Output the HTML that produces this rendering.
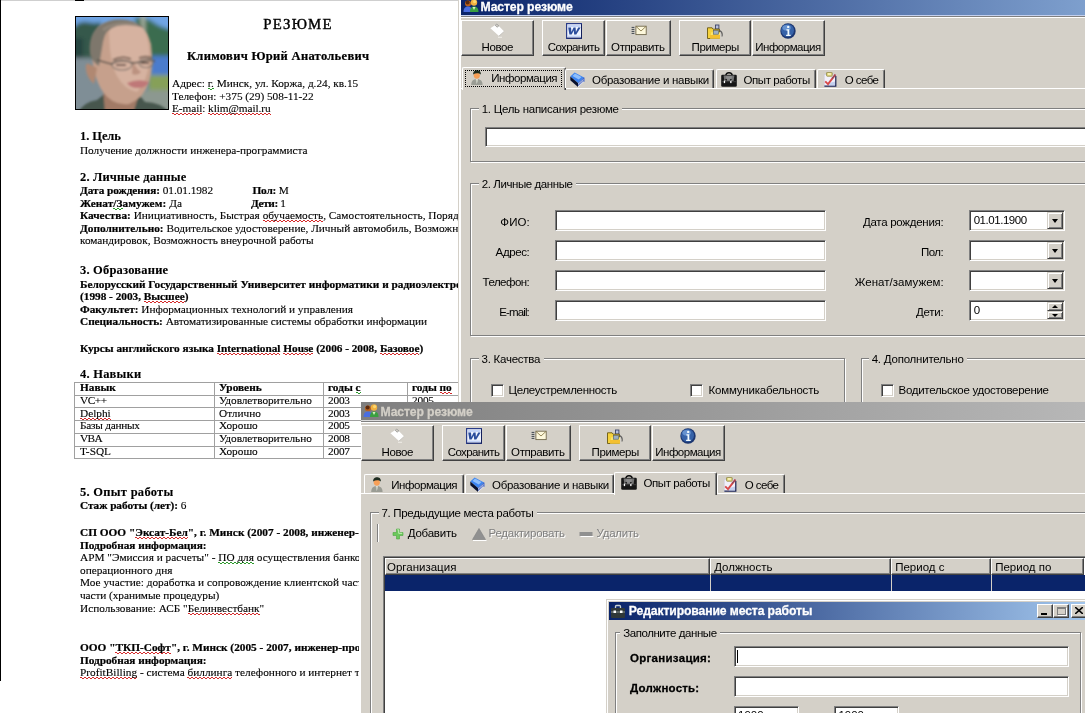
<!DOCTYPE html><html lang="ru"><head><meta charset="utf-8"><title>Мастер резюме</title><style>
*{box-sizing:border-box;margin:0;padding:0}
html,body{width:1085px;height:713px;overflow:hidden;background:#fff}
body{position:relative;font-family:"Liberation Sans",sans-serif;font-size:11.5px;color:#000}
.a{position:absolute}
.t{position:absolute;white-space:nowrap;line-height:14px;height:14px;font-size:11.5px;opacity:.999;will-change:opacity}
.s{font-family:"Liberation Serif",serif;font-size:11.3px;line-height:13px;height:13px}
.h{font-size:12.5px;font-weight:bold}
b{font-weight:bold}
.sq,.sg{background-repeat:no-repeat;background-size:100% 1px,100% 1px;background-position:0 calc(100% - 1px),0 100%;padding-bottom:1px}
.sq{background-image:repeating-linear-gradient(90deg,#d42a2a 0 2px,transparent 2px 4px),repeating-linear-gradient(90deg,transparent 0 2px,#d42a2a 2px 4px)}
.sg{background-image:repeating-linear-gradient(90deg,#2a9a2a 0 2px,transparent 2px 4px),repeating-linear-gradient(90deg,transparent 0 2px,#2a9a2a 2px 4px)}
.t b{-webkit-text-stroke:.28px currentColor}
.s{-webkit-text-stroke:.12px #000}
.s b{-webkit-text-stroke:.22px #000}
.dis{color:#808080;text-shadow:1px 1px 0 #fff}
/* classic widgets */
.btn{position:absolute;background:#d4d0c8;border:1px solid;border-color:#fff #404040 #404040 #fff;box-shadow:inset -1px -1px 0 #808080}
.inp{position:absolute;background:#fff;border:1px solid;border-color:#808080 #fff #fff #808080;box-shadow:inset 1px 1px 0 #404040,inset -1px -1px 0 #d4d0c8}
.gb{position:absolute;border:1px solid #808080;box-shadow:inset 1px 1px 0 #fff,1px 1px 0 #fff}
.gbl{position:absolute;background:#d4d0c8;height:12px}
.cb{position:absolute;width:13px;height:13px;background:#fff;border:1px solid;border-color:#808080 #fff #fff #808080;box-shadow:inset 1px 1px 0 #404040,inset -1px -1px 0 #d4d0c8}
.ddb{position:absolute;width:16px;background:#d4d0c8;border:1px solid;border-color:#d4d0c8 #404040 #404040 #d4d0c8;box-shadow:inset 1px 1px 0 #fff,inset -1px -1px 0 #808080}
.tab{position:absolute;background:#d4d0c8;border:1px solid;border-color:#fff #404040 transparent #fff;border-bottom:0;box-shadow:inset -1px 0 0 #808080;border-radius:2px 2px 0 0}
</style></head><body>
<div class="a" style="left:0;top:0;width:461px;height:713px;background:#fff;overflow:hidden">
<div class="a" style="left:0;top:0;width:458px;height:1px;background:#cfcfcf"></div>
<div class="a" style="left:75px;top:0;width:9px;height:1px;background:#000"></div>
<div class="a" style="left:0;top:0;width:1.2px;height:680.5px;background:#000"></div>
<svg class="a" style="left:75px;top:16px" width="94" height="94" viewBox="0 0 94 94">
<defs><filter id="bl" x="-10%" y="-10%" width="120%" height="120%"><feGaussianBlur stdDeviation="1.300"/></filter>
<filter id="bl2" x="-10%" y="-10%" width="120%" height="120%"><feGaussianBlur stdDeviation="2.200"/></filter>
<clipPath id="pc"><rect x="1" y="1" width="92" height="92"/></clipPath></defs>
<rect width="94" height="94" fill="#000"/>
<g clip-path="url(#pc)">
<rect x="1" y="1" width="92" height="92" fill="#6f8c9e"/>
<g filter="url(#bl2)">
<rect x="-4" y="-4" width="102" height="20" fill="#6fa4e4"/>
<path d="M-4 14Q4 4 12 6t14 0l4 40H-4z" fill="#34584c"/>
<path d="M-4 22h12v22H-4z" fill="#284440"/>
<path d="M60 2q10-2 18 4t20 8v30H60z" fill="#3a6c50"/>
<path d="M66 -2h4v40h-4z" fill="#a8b0a0"/>
<rect x="76" y="40" width="22" height="20" fill="#4c7ccc"/>
<rect x="74" y="59" width="24" height="16" fill="#86a058"/>
<path d="M-4 42H32V98H-4z" fill="#7f8e96"/>
<path d="M60 74H98V98H60z" fill="#8c9890"/>
</g>
<g filter="url(#bl)">
<path d="M2 98q6-12 20-14l10-8h30l8 10q16 0 26 12z" fill="#46564e"/>
<path d="M28 70q10 16 30 12l6-4-6 20H30z" fill="#a27a66"/>
<path d="M16 30Q16 4 46 4q24 0 30 24 3 22-2 38T54 88q-16 2-26-12T16 30z" fill="#c6a08c"/>
<path d="M34 10q16-8 34 2 8 14 6 36-3 20-12 28-12-2-20-16T34 10z" fill="#d6b2a0"/>
<path d="M15 38Q12 12 34 5q20-5 36 7-16-5-28-2T28 26l-4 24q-7-4-9-12z" fill="#7e776c"/><path d="M28 14q12-9 34-5" fill="none" stroke="#9c8f82" stroke-width="3" opacity=".6"/>
<path d="M14 48q-4-2-3 6t8 14l3-16z" fill="#b08872"/>
<path d="M58 44q2 8 8 12-3 4-9 2z" fill="#b48a78" opacity=".8"/>
<path d="M52 67q11-5 22-1-3 6-11 6t-11-5z" fill="#bf7878"/>
<path d="M22 44l14 4q10-6 22-1l8-1q6-3 14-1" fill="none" stroke="#5c544c" stroke-width="1.500"/>
<ellipse cx="47" cy="49" rx="10" ry="5" fill="none" stroke="#7a7068" stroke-width="1.100"/>
<ellipse cx="71" cy="47" rx="7" ry="4.500" fill="none" stroke="#7a7068" stroke-width="1.100"/>
<path d="M38 44q9-5 18-1M64 42q7-3 13 0" fill="none" stroke="#6a5448" stroke-width="1.600"/><path d="M41 49h10M66 47h8" stroke="#4c3c34" stroke-width="1.500"/>
</g></g></svg>
<div class="t s" style="left:263.3px;top:14.5px;font-size:14.8px;height:18px;line-height:18px;-webkit-text-stroke:.4px #000;letter-spacing:1.187px;">РЕЗЮМЕ</div>
<div class="t s " style="left:187px;top:49.5px;font-size:12.5px;letter-spacing:0.307px;"><b>Климович Юрий Анатольевич</b></div>
<div class="t s " style="left:172px;top:77.0px;letter-spacing:-0.015px;">Адрес: <span class="sg">г.</span> Минск, ул. Коржа, д.24, кв.15</div>
<div class="t s " style="left:172px;top:89.5px;letter-spacing:-0.003px;">Телефон: +375 (29) 508-11-22</div>
<div class="t s " style="left:172px;top:102.0px;letter-spacing:-0.077px;"><span class="sq">E-mail</span>: <span class="sq">klim@mail.ru</span></div>
<div class="t s h" style="left:80px;top:130.0px;letter-spacing:-0.084px;">1. Цель</div>
<div class="t s " style="left:80px;top:144.0px;letter-spacing:-0.045px;">Получение должности инженера-программиста</div>
<div class="t s h" style="left:80px;top:171.0px;letter-spacing:0.153px;">2. Личные данные</div>
<div class="t s " style="left:80px;top:184.0px;letter-spacing:-0.055px;"><b>Дата рождения:</b> 01.01.1982</div>
<div class="t s " style="left:252.5px;top:184.0px;letter-spacing:-0.173px;"><b>Пол:</b> М</div>
<div class="t s " style="left:80px;top:196.5px;letter-spacing:0.053px;"><b>Женат<span class="sg">/З</span>амужем:</b> Да</div>
<div class="t s " style="left:251px;top:196.5px;letter-spacing:-0.389px;"><b>Дети:</b> 1</div>
<div class="t s " style="left:80px;top:209.0px;"><b>Качества:</b> Инициативность, Быстрая <span class="sq">обучаемость</span>, Самостоятельность, Порядочность</div>
<div class="t s " style="left:80px;top:221.5px;"><b>Дополнительно:</b> Водительское удостоверение, Личный автомобиль, Возможность</div>
<div class="t s " style="left:80px;top:234.0px;letter-spacing:-0.028px;">командировок, Возможность внеурочной работы</div>
<div class="t s h" style="left:80px;top:263.5px;letter-spacing:0.198px;">3. Образование</div>
<div class="t s " style="left:80px;top:277.5px;"><b>Белорусский Государственный Университет информатики и радиоэлектроники</b></div>
<div class="t s " style="left:80px;top:290.0px;letter-spacing:-0.016px;"><b>(1998 - 2003, <span class="sq">Высшее</span>)</b></div>
<div class="t s " style="left:80px;top:302.5px;letter-spacing:-0.031px;"><b>Факультет:</b> Информационных технологий и управления</div>
<div class="t s " style="left:80px;top:315.0px;letter-spacing:-0.027px;"><b>Специальность:</b> Автоматизированные системы обработки информации</div>
<div class="t s " style="left:80px;top:341.5px;letter-spacing:-0.020px;"><b>Курсы английского языка <span class="sq">International</span> <span class="sq">House</span> (2006 - 2008, <span class="sq">Базовое</span>)</b></div>
<div class="t s h" style="left:80px;top:368.0px;letter-spacing:0.226px;">4. Навыки</div>
<div class="a" style="left:74px;top:382px;width:400px;height:76.5px;border-top:1px solid #a0a0a0;border-left:1px solid #a0a0a0"></div>
<div class="a" style="left:74px;top:394.7px;width:400px;height:1px;background:#a0a0a0"></div>
<div class="t s " style="left:80px;top:381.3px;"><b>Навык</b></div>
<div class="t s " style="left:219px;top:381.3px;"><b>Уровень</b></div>
<div class="t s " style="left:328px;top:381.3px;"><b>годы <span class="sg">с</span></b></div>
<div class="t s " style="left:412px;top:381.3px;"><b>годы <span class="sq">по</span></b></div>
<div class="a" style="left:74px;top:407.4px;width:400px;height:1px;background:#a0a0a0"></div>
<div class="t s " style="left:80px;top:394.0px;letter-spacing:-0.479px;">VC++</div>
<div class="t s " style="left:219px;top:394.0px;letter-spacing:-0.052px;">Удовлетворительно</div>
<div class="t s " style="left:328px;top:394.0px;letter-spacing:-0.198px;">2003</div>
<div class="t s " style="left:412px;top:394.0px;letter-spacing:-0.198px;">2005</div>
<div class="a" style="left:74px;top:420.1px;width:400px;height:1px;background:#a0a0a0"></div>
<div class="t s " style="left:80px;top:406.7px;"><span class="sq">Delphi</span></div>
<div class="t s " style="left:219px;top:406.7px;">Отлично</div>
<div class="t s " style="left:328px;top:406.7px;letter-spacing:-0.198px;">2003</div>
<div class="a" style="left:74px;top:432.8px;width:400px;height:1px;background:#a0a0a0"></div>
<div class="t s " style="left:80px;top:419.40000000000003px;letter-spacing:-0.248px;">Базы данных</div>
<div class="t s " style="left:219px;top:419.40000000000003px;">Хорошо</div>
<div class="t s " style="left:328px;top:419.40000000000003px;letter-spacing:-0.198px;">2005</div>
<div class="a" style="left:74px;top:445.5px;width:400px;height:1px;background:#a0a0a0"></div>
<div class="t s " style="left:80px;top:432.1px;letter-spacing:-0.630px;">VBA</div>
<div class="t s " style="left:219px;top:432.1px;letter-spacing:-0.052px;">Удовлетворительно</div>
<div class="t s " style="left:328px;top:432.1px;letter-spacing:-0.198px;">2008</div>
<div class="a" style="left:74px;top:458.2px;width:400px;height:1px;background:#a0a0a0"></div>
<div class="t s " style="left:80px;top:444.8px;">T-SQL</div>
<div class="t s " style="left:219px;top:444.8px;">Хорошо</div>
<div class="t s " style="left:328px;top:444.8px;letter-spacing:-0.198px;">2007</div>
<div class="a" style="left:214px;top:382px;width:1px;height:76.5px;background:#a0a0a0"></div>
<div class="a" style="left:323px;top:382px;width:1px;height:76.5px;background:#a0a0a0"></div>
<div class="a" style="left:407px;top:382px;width:1px;height:76.5px;background:#a0a0a0"></div>
<div class="t s h" style="left:80px;top:486.0px;letter-spacing:0.274px;">5. Опыт работы</div>
<div class="t s " style="left:80px;top:498.5px;letter-spacing:-0.045px;"><b>Стаж работы (лет):</b> 6</div>
<div class="t s " style="left:80px;top:526.0px;"><b>СП ООО &quot;<span class="sq">Эксат-Бел</span>&quot;, г. Минск (2007 - 2008, инженер-программист)</b></div>
<div class="t s " style="left:80px;top:538.5px;letter-spacing:-0.033px;"><b>Подробная информация:</b></div>
<div class="t s " style="left:80px;top:551.0px;">АРМ &quot;Эмиссия и расчеты&quot; - <span class="sg">ПО для</span> осуществления банковского</div>
<div class="t s " style="left:80px;top:563.5px;letter-spacing:-0.017px;">операционного дня</div>
<div class="t s " style="left:80px;top:576.0px;">Мое участие: доработка и сопровождение клиентской части и серверной</div>
<div class="t s " style="left:80px;top:588.5px;letter-spacing:-0.069px;">части (хранимые процедуры)</div>
<div class="t s " style="left:80px;top:601.5px;letter-spacing:-0.011px;">Использование: АСБ &quot;<span class="sq">Белинвестбанк</span>&quot;</div>
<div class="t s " style="left:80px;top:641.0px;"><b>ООО &quot;<span class="sq">ТКП-Софт</span>&quot;, г. Минск (2005 - 2007, инженер-программист)</b></div>
<div class="t s " style="left:80px;top:653.5px;letter-spacing:-0.033px;"><b>Подробная информация:</b></div>
<div class="t s " style="left:80px;top:666.0px;"><span class="sq">ProfitBilling</span> - система <span class="sq">биллинга</span> телефонного и интернет трафика</div>
</div>
<div class="a" style="left:458px;top:0;width:1px;height:402px;background:#d4d0c8"></div>
<div class="a" style="left:459px;top:0;width:2px;height:402px;background:#fff"></div>
<div class="a" style="left:461px;top:15px;width:640px;height:420px;background:#d4d0c8"></div>
<div class="a" style="left:461px;top:0px;width:640px;height:15px;background:linear-gradient(90deg,#0a246a 0,#a6caf0 100%);background-size:840px 100%;background-repeat:no-repeat"></div>
<svg class="a" style="left:463px;top:-3px" width="16" height="16" viewBox="0 0 16 16"><circle cx="5" cy="6.5" r="3" fill="#b8601c"/><circle cx="4.6" cy="5.6" r="2" fill="#5a2a10"/><path d="M0.5 15c0-4 2-5.5 4.5-5.5s4.5 1.5 4.5 5.5z" fill="#4a6ee0"/><circle cx="11" cy="5.5" r="3.2" fill="#f0b040"/><circle cx="11.6" cy="4.6" r="1.6" fill="#fbd870"/><path d="M7 15c0-4 1.8-5.5 4.2-5.5s4.3 1.5 4.3 5.5z" fill="#3aa040"/><path d="M9.5 10l1.5 3 1.5-3z" fill="#d8f0c0"/></svg>
<div class="t " style="left:480.5px;top:-0.5px;color:#fff;font-size:12.2px;letter-spacing:-0.122px;"><b>Мастер резюме</b></div>
<div class="a" style="left:461px;top:15px;width:640px;height:1px;background:#c4d0ee"></div>
<div class="a" style="left:461px;top:16px;width:640px;height:1px;background:#808080"></div>
<div class="a" style="left:461px;top:17px;width:640px;height:1px;background:#fff"></div>
<div class="btn" style="left:461px;top:20px;width:73px;height:36px"></div>
<div class="t " style="left:481.5px;top:39.5px;letter-spacing:-0.396px;">Новое</div>
<svg class="a" style="left:489.5px;top:23px" width="16" height="16" viewBox="0 0 16 16"><path d="M6.800 1L14.200 8.400 9 13 .4 5.300z" fill="#fff"/><path d="M5.200 2.300L6.800 1l2 2-1.700 1.200z" fill="#d4d0c8" stroke="#8a8a86" stroke-width=".7"/><path d="M14.200 8.400L9 13" stroke="#b8b6b0" stroke-width=".7" fill="none"/><path d="M8 14.300h4" stroke="#efede8" stroke-width="1"/></svg>
<div class="btn" style="left:542px;top:20px;width:63px;height:36px"></div>
<div class="t " style="left:547.7px;top:39.5px;letter-spacing:-0.607px;">Сохранить</div>
<svg class="a" style="left:566px;top:23px" width="16" height="16" viewBox="0 0 16 16"><rect x=".6" y=".6" width="15" height="15" fill="#eef3fe" stroke="#2a3c88" stroke-width="1.200"/><path d="M1.200 15h14.400V1.200" fill="none" stroke="#14205c" stroke-width="1.200"/><rect x="2" y="2" width="12.400" height="2" fill="#c4d4f8"/><path d="M2.200 4.600h2.800l.4 4.300 2.200-4.300h2l.3 4.300 2.300-4.300h2.400L10.300 11.600H8.200L7.800 7.600 5.600 11.600H3.400z" fill="#2a4c9c"/><rect x="2" y="12.600" width="12.400" height="1.600" fill="#c4d4f8"/></svg>
<div class="btn" style="left:606px;top:20px;width:65px;height:36px"></div>
<div class="t " style="left:611.1px;top:39.5px;letter-spacing:-0.391px;">Отправить</div>
<svg class="a" style="left:630.5px;top:23px" width="16" height="16" viewBox="0 0 16 16"><rect x="4.900" y="3.200" width="10.300" height="8.400" fill="#fdf8dc" stroke="#70684c" stroke-width=".9"/><path d="M5 3.400l5 4.600 5-4.600" fill="none" stroke="#8a7c4c" stroke-width=".9"/><path d="M.6 4.400h2.800M.6 6.400h2.800M.6 8.400h2.800M.6 10.400h2.800" stroke="#2c3440" stroke-width=".9"/></svg>
<div class="btn" style="left:679px;top:20px;width:72px;height:36px"></div>
<div class="t " style="left:691.5px;top:39.5px;letter-spacing:-0.360px;">Примеры</div>
<svg class="a" style="left:707px;top:23px" width="16" height="16" viewBox="0 0 16 16"><rect x="8.500" y="2" width="3.400" height="4" fill="#b8c0dc" stroke="#3c4468" stroke-width=".9"/><path d="M.5 4.800h4.600l1 1.400h6.400v9.300H.5z" fill="#f6d23c" stroke="#6a5810" stroke-width=".9"/><path d="M3.200 15.500l1-6.300h8.800v6.300z" fill="#fbe56c"/><rect x="6.500" y="7.600" width="5" height="3.600" fill="#9cb0c4" stroke="#4c586c" stroke-width=".6"/><path d="M3 12h10v3.500H3z" fill="#f4c030"/><path d="M12.500 7.500q3.500 1.500 2.500 6" fill="none" stroke="#5c5c5c" stroke-width="1.100"/></svg>
<div class="btn" style="left:752px;top:20px;width:72.5px;height:36px"></div>
<div class="t " style="left:755.3px;top:39.5px;letter-spacing:-0.502px;">Информация</div>
<svg class="a" style="left:780.2px;top:23px" width="16" height="16" viewBox="0 0 16 16"><circle cx="8" cy="8" r="7.700" fill="#1c3670"/><circle cx="7.600" cy="7.400" r="6.400" fill="#3662a8"/><ellipse cx="6.600" cy="4.800" rx="4.200" ry="2.800" fill="#7aa6e0" opacity=".7"/><circle cx="8.200" cy="3.900" r="1.200" fill="#f2fbff"/><path d="M6.400 6.300h2.900v5.400h1.400v1.300H6.100v-1.300h1.400V7.600H6.400z" fill="#f2fbff"/></svg>
<div class="a" style="left:459px;top:88px;width:642px;height:340px;background:#d4d0c8;border-top:1px solid #fff;border-left:2px solid #fff"></div>
<div class="tab" style="left:462px;top:67px;width:103.5px;height:23px"></div>
<div class="t " style="left:491.3px;top:70.5px;letter-spacing:-0.458px;">Информация</div>
<svg class="a" style="left:469.3px;top:70px" width="16" height="16" viewBox="0 0 16 16"><path d="M2.200 15c0-3.800 1.800-6 5.600-6s5.800 2.200 5.800 6z" fill="#9a9c94"/><path d="M6.600 9.200L7.800 14 9 9.200z" fill="#f0f0ea"/><path d="M7.600 10l.3 3.500.3-3.500z" fill="#7a8a70"/><circle cx="7.800" cy="5.600" r="3.100" fill="#f8a058"/><path d="M4.200 4.400C4 1.200 6 .2 8 .2s4 .8 3.900 4.400C10 3 6.400 3 4.200 4.400z" fill="#1e2c20"/></svg>
<div class="a" style="left:464.5px;top:70px;width:97px;height:17px;border:1px dotted #000"></div>
<div class="tab" style="left:565.0px;top:69px;width:149.0px;height:19px"></div>
<div class="t " style="left:592px;top:73.0px;letter-spacing:-0.288px;">Образование и навыки</div>
<svg class="a" style="left:570px;top:72px" width="16" height="16" viewBox="0 0 16 16"><path d="M.3 4.600L4.600.4 14 5.500 8 11z" fill="#3c84f0"/><path d="M2.500 4L5 1.500l6.500 3.600-2.700 2.500z" fill="#9cc8fc" opacity=".85"/><path d="M8 11l6-5.500v1.300L8 12.200z" fill="#2450c8"/><path d="M.3 4.600L8 11v4L.3 8.200z" fill="#08102c"/><path d="M8 12l6-5.600v3.400L8 15z" fill="#fff"/><path d="M8 13l6-5.500M8 14l6-5.500" stroke="#2c4cb0" stroke-width=".7"/><path d="M14 5.500v4.300" stroke="#2450c8" stroke-width=".8"/></svg>
<div class="tab" style="left:715.5px;top:69px;width:100.0px;height:19px"></div>
<div class="t " style="left:743.5px;top:73.0px;letter-spacing:-0.427px;">Опыт работы</div>
<svg class="a" style="left:721px;top:72px" width="16" height="16" viewBox="0 0 16 16"><path d="M4.800 3.600Q4.800 .7 8 .7t3.200 2.900" stroke="#0c0c0c" stroke-width="1.400" fill="none"/><rect x=".2" y="2.800" width="15.600" height="12" rx="1.300" fill="#161616"/><path d="M2.600 3.600h10.800l-.8 5.400H3.400z" fill="#747474"/><path d="M5 4.300h6l-.5 3.500h-5z" fill="#8c8c8c"/><rect x=".2" y="9.200" width="15.600" height="1" fill="#3c3c3c"/><rect x="2.800" y="8.600" width="1.300" height="2.500" fill="#fff"/><rect x="9.200" y="8.600" width="1.300" height="2.500" fill="#fff"/><path d="M4.600 7.200l1.200 1M10.400 7.200l-1.200 1" stroke="#0c0c0c" stroke-width="1.200"/></svg>
<div class="tab" style="left:817.0px;top:69px;width:68.0px;height:19px"></div>
<div class="t " style="left:844.7px;top:73.0px;letter-spacing:-0.543px;">О себе</div>
<svg class="a" style="left:823.3px;top:72px" width="16" height="16" viewBox="0 0 16 16"><rect x="1.200" y="2.400" width="11.400" height="11.800" fill="#f2f0fa" stroke="#c8c8dc" stroke-width=".6"/><path d="M1.400 14.200h11.400V4" fill="none" stroke="#1c2454" stroke-width="1.200"/><path d="M6 11l6-1.500v4H6z" fill="#b8c8ec" opacity=".8"/><rect x="3.600" y=".4" width="5.600" height="3.800" rx=".6" fill="#e8dc84" stroke="#8a8440" stroke-width=".8"/><rect x="5" y="1.300" width="2.800" height="1.400" fill="#fcf8c8"/><path d="M2.200 9.300l2.800 2.800L12.400 2.600" fill="none" stroke="#d84848" stroke-width="1.900"/><path d="M9 6.500l3.400-3.900" stroke="#8c4c5c" stroke-width="1.200"/></svg>
<div class="gb" style="left:470px;top:108px;width:640px;height:54px"></div>
<div class="gbl" style="left:478.7px;top:103px;width:143.3px"></div>
<div class="t " style="left:481.7px;top:102.0px;letter-spacing:-0.272px;">1. Цель написания резюме</div>
<div class="inp" style="left:485px;top:127px;width:620px;height:20px"></div>
<div class="gb" style="left:470px;top:183px;width:640px;height:153px"></div>
<div class="gbl" style="left:478.7px;top:178px;width:97.3px"></div>
<div class="t " style="left:481.7px;top:177.0px;letter-spacing:-0.409px;">2. Личные данные</div>
<div class="t " style="left:500.3px;top:214.5px;letter-spacing:0.115px;">ФИО:</div>
<div class="inp" style="left:555px;top:210px;width:271px;height:21px"></div>
<div class="t " style="left:495.6px;top:244.5px;letter-spacing:-0.385px;">Адрес:</div>
<div class="inp" style="left:555px;top:240px;width:271px;height:21px"></div>
<div class="t " style="left:482.6px;top:274.5px;letter-spacing:-0.529px;">Телефон:</div>
<div class="inp" style="left:555px;top:270px;width:271px;height:21px"></div>
<div class="t " style="left:499.2px;top:304.5px;letter-spacing:-0.864px;">E-mail:</div>
<div class="inp" style="left:555px;top:300px;width:271px;height:21px"></div>
<div class="t " style="left:862.9px;top:214.5px;letter-spacing:-0.271px;">Дата рождения:</div>
<div class="inp" style="left:969px;top:210px;width:96px;height:21px"></div>
<div class="ddb" style="left:1047px;top:212px;height:17px"></div>
<div class="a" style="left:1051.5px;top:219px;width:0;height:0;border:3.5px solid transparent;border-top:4px solid #000;border-bottom:0"></div>
<div class="t " style="left:921.1px;top:244.5px;letter-spacing:-0.576px;">Пол:</div>
<div class="inp" style="left:969px;top:240px;width:96px;height:21px"></div>
<div class="ddb" style="left:1047px;top:242px;height:17px"></div>
<div class="a" style="left:1051.5px;top:249px;width:0;height:0;border:3.5px solid transparent;border-top:4px solid #000;border-bottom:0"></div>
<div class="t " style="left:854.8px;top:274.5px;letter-spacing:0.022px;">Женат/замужем:</div>
<div class="inp" style="left:969px;top:270px;width:96px;height:21px"></div>
<div class="ddb" style="left:1047px;top:272px;height:17px"></div>
<div class="a" style="left:1051.5px;top:279px;width:0;height:0;border:3.5px solid transparent;border-top:4px solid #000;border-bottom:0"></div>
<div class="t " style="left:916.1px;top:304.5px;letter-spacing:-0.276px;">Дети:</div>
<div class="inp" style="left:969px;top:300px;width:96px;height:21px"></div>
<div class="ddb" style="left:1047px;top:302px;height:9px"></div>
<div class="a" style="left:1052px;top:304.5px;width:0;height:0;border:3px solid transparent;border-bottom:3px solid #000;border-top:0"></div>
<div class="ddb" style="left:1047px;top:311px;height:8px"></div>
<div class="a" style="left:1052px;top:313.5px;width:0;height:0;border:3px solid transparent;border-top:3px solid #000;border-bottom:0"></div>
<div class="t " style="left:973.7px;top:213.3px;letter-spacing:-0.463px;">01.01.1900</div>
<div class="t " style="left:973.7px;top:302.5px;">0</div>
<div class="gb" style="left:470px;top:358px;width:375px;height:60px"></div>
<div class="gbl" style="left:478.5px;top:353px;width:65px"></div>
<div class="t " style="left:481.5px;top:352.0px;letter-spacing:-0.242px;">3. Качества</div>
<div class="gb" style="left:860.5px;top:358px;width:300px;height:60px"></div>
<div class="gbl" style="left:868.7px;top:353px;width:98.2px"></div>
<div class="t " style="left:871.7px;top:352.0px;letter-spacing:-0.224px;">4. Дополнительно</div>
<div class="cb" style="left:491px;top:384px"></div>
<div class="t " style="left:508.5px;top:382.9px;letter-spacing:-0.315px;">Целеустремленность</div>
<div class="cb" style="left:690px;top:384px"></div>
<div class="t " style="left:708.6px;top:382.9px;letter-spacing:-0.210px;">Коммуникабельность</div>
<div class="cb" style="left:880.5px;top:384px"></div>
<div class="t " style="left:898.6px;top:382.9px;letter-spacing:-0.296px;">Водительское удостоверение</div>
<div class="a" style="left:361px;top:420px;width:740px;height:420px;background:#d4d0c8"></div>
<div class="a" style="left:361px;top:402px;width:740px;height:18px;background:linear-gradient(90deg,#7f7f7f 0,#c0c0c0 100%);background-size:840px 100%;background-repeat:no-repeat"></div>
<svg class="a" style="left:363px;top:402px" width="16" height="16" viewBox="0 0 16 16"><circle cx="5" cy="6.5" r="3" fill="#b8601c"/><circle cx="4.6" cy="5.6" r="2" fill="#5a2a10"/><path d="M0.5 15c0-4 2-5.5 4.5-5.5s4.5 1.5 4.5 5.5z" fill="#4a6ee0"/><circle cx="11" cy="5.5" r="3.2" fill="#f0b040"/><circle cx="11.6" cy="4.6" r="1.6" fill="#fbd870"/><path d="M7 15c0-4 1.8-5.5 4.2-5.5s4.3 1.5 4.3 5.5z" fill="#3aa040"/><path d="M9.5 10l1.5 3 1.5-3z" fill="#d8f0c0"/></svg>
<div class="t " style="left:380.5px;top:404.5px;color:#d4d0c8;font-size:12.2px;letter-spacing:-0.122px;"><b>Мастер резюме</b></div>
<div class="a" style="left:361px;top:420px;width:740px;height:1px;background:#dcdcdc"></div>
<div class="a" style="left:361px;top:421px;width:740px;height:1px;background:#808080"></div>
<div class="a" style="left:361px;top:422px;width:740px;height:1px;background:#fff"></div>
<div class="btn" style="left:361px;top:425px;width:73px;height:36px"></div>
<div class="t " style="left:381.5px;top:444.5px;letter-spacing:-0.396px;">Новое</div>
<svg class="a" style="left:389.5px;top:428px" width="16" height="16" viewBox="0 0 16 16"><path d="M6.800 1L14.200 8.400 9 13 .4 5.300z" fill="#fff"/><path d="M5.200 2.300L6.800 1l2 2-1.700 1.200z" fill="#d4d0c8" stroke="#8a8a86" stroke-width=".7"/><path d="M14.200 8.400L9 13" stroke="#b8b6b0" stroke-width=".7" fill="none"/><path d="M8 14.300h4" stroke="#efede8" stroke-width="1"/></svg>
<div class="btn" style="left:442px;top:425px;width:63px;height:36px"></div>
<div class="t " style="left:447.70000000000005px;top:444.5px;letter-spacing:-0.607px;">Сохранить</div>
<svg class="a" style="left:466px;top:428px" width="16" height="16" viewBox="0 0 16 16"><rect x=".6" y=".6" width="15" height="15" fill="#eef3fe" stroke="#2a3c88" stroke-width="1.200"/><path d="M1.200 15h14.400V1.200" fill="none" stroke="#14205c" stroke-width="1.200"/><rect x="2" y="2" width="12.400" height="2" fill="#c4d4f8"/><path d="M2.200 4.600h2.800l.4 4.300 2.200-4.300h2l.3 4.300 2.300-4.300h2.400L10.300 11.600H8.200L7.800 7.600 5.600 11.600H3.400z" fill="#2a4c9c"/><rect x="2" y="12.600" width="12.400" height="1.600" fill="#c4d4f8"/></svg>
<div class="btn" style="left:506px;top:425px;width:65px;height:36px"></div>
<div class="t " style="left:511.1px;top:444.5px;letter-spacing:-0.391px;">Отправить</div>
<svg class="a" style="left:530.5px;top:428px" width="16" height="16" viewBox="0 0 16 16"><rect x="4.900" y="3.200" width="10.300" height="8.400" fill="#fdf8dc" stroke="#70684c" stroke-width=".9"/><path d="M5 3.400l5 4.600 5-4.600" fill="none" stroke="#8a7c4c" stroke-width=".9"/><path d="M.6 4.400h2.800M.6 6.400h2.800M.6 8.400h2.800M.6 10.400h2.800" stroke="#2c3440" stroke-width=".9"/></svg>
<div class="btn" style="left:579px;top:425px;width:72px;height:36px"></div>
<div class="t " style="left:591.5px;top:444.5px;letter-spacing:-0.360px;">Примеры</div>
<svg class="a" style="left:607px;top:428px" width="16" height="16" viewBox="0 0 16 16"><rect x="8.500" y="2" width="3.400" height="4" fill="#b8c0dc" stroke="#3c4468" stroke-width=".9"/><path d="M.5 4.800h4.600l1 1.400h6.400v9.300H.5z" fill="#f6d23c" stroke="#6a5810" stroke-width=".9"/><path d="M3.200 15.500l1-6.300h8.800v6.300z" fill="#fbe56c"/><rect x="6.500" y="7.600" width="5" height="3.600" fill="#9cb0c4" stroke="#4c586c" stroke-width=".6"/><path d="M3 12h10v3.500H3z" fill="#f4c030"/><path d="M12.500 7.500q3.500 1.500 2.500 6" fill="none" stroke="#5c5c5c" stroke-width="1.100"/></svg>
<div class="btn" style="left:652px;top:425px;width:72.5px;height:36px"></div>
<div class="t " style="left:655.3px;top:444.5px;letter-spacing:-0.502px;">Информация</div>
<svg class="a" style="left:680.2px;top:428px" width="16" height="16" viewBox="0 0 16 16"><circle cx="8" cy="8" r="7.700" fill="#1c3670"/><circle cx="7.600" cy="7.400" r="6.400" fill="#3662a8"/><ellipse cx="6.600" cy="4.800" rx="4.200" ry="2.800" fill="#7aa6e0" opacity=".7"/><circle cx="8.200" cy="3.900" r="1.200" fill="#f2fbff"/><path d="M6.400 6.300h2.900v5.400h1.400v1.300H6.100v-1.300h1.400V7.600H6.400z" fill="#f2fbff"/></svg>
<div class="a" style="left:359px;top:493px;width:742px;height:340px;background:#d4d0c8;border-top:1px solid #fff;border-left:2px solid #fff"></div>
<div class="tab" style="left:363.5px;top:474px;width:100.5px;height:19px"></div>
<div class="t " style="left:391.3px;top:478.0px;letter-spacing:-0.458px;">Информация</div>
<svg class="a" style="left:369.3px;top:477px" width="16" height="16" viewBox="0 0 16 16"><path d="M2.200 15c0-3.800 1.800-6 5.600-6s5.800 2.200 5.800 6z" fill="#9a9c94"/><path d="M6.600 9.200L7.800 14 9 9.200z" fill="#f0f0ea"/><path d="M7.600 10l.3 3.500.3-3.500z" fill="#7a8a70"/><circle cx="7.800" cy="5.600" r="3.100" fill="#f8a058"/><path d="M4.200 4.400C4 1.200 6 .2 8 .2s4 .8 3.900 4.400C10 3 6.400 3 4.200 4.400z" fill="#1e2c20"/></svg>
<div class="tab" style="left:465.0px;top:474px;width:149.0px;height:19px"></div>
<div class="t " style="left:492px;top:478.0px;letter-spacing:-0.288px;">Образование и навыки</div>
<svg class="a" style="left:470px;top:477px" width="16" height="16" viewBox="0 0 16 16"><path d="M.3 4.600L4.600.4 14 5.500 8 11z" fill="#3c84f0"/><path d="M2.500 4L5 1.500l6.500 3.600-2.700 2.500z" fill="#9cc8fc" opacity=".85"/><path d="M8 11l6-5.500v1.300L8 12.200z" fill="#2450c8"/><path d="M.3 4.600L8 11v4L.3 8.200z" fill="#08102c"/><path d="M8 12l6-5.600v3.400L8 15z" fill="#fff"/><path d="M8 13l6-5.500M8 14l6-5.500" stroke="#2c4cb0" stroke-width=".7"/><path d="M14 5.500v4.300" stroke="#2450c8" stroke-width=".8"/></svg>
<div class="tab" style="left:614px;top:472px;width:103.0px;height:23px"></div>
<div class="t " style="left:643.5px;top:475.5px;letter-spacing:-0.427px;">Опыт работы</div>
<svg class="a" style="left:621px;top:475px" width="16" height="16" viewBox="0 0 16 16"><path d="M4.800 3.600Q4.800 .7 8 .7t3.200 2.900" stroke="#0c0c0c" stroke-width="1.400" fill="none"/><rect x=".2" y="2.800" width="15.600" height="12" rx="1.300" fill="#161616"/><path d="M2.600 3.600h10.800l-.8 5.400H3.400z" fill="#747474"/><path d="M5 4.300h6l-.5 3.500h-5z" fill="#8c8c8c"/><rect x=".2" y="9.200" width="15.600" height="1" fill="#3c3c3c"/><rect x="2.800" y="8.600" width="1.300" height="2.500" fill="#fff"/><rect x="9.200" y="8.600" width="1.300" height="2.500" fill="#fff"/><path d="M4.600 7.200l1.200 1M10.400 7.200l-1.200 1" stroke="#0c0c0c" stroke-width="1.200"/></svg>
<div class="tab" style="left:717.0px;top:474px;width:68.0px;height:19px"></div>
<div class="t " style="left:744.7px;top:478.0px;letter-spacing:-0.543px;">О себе</div>
<svg class="a" style="left:723.3px;top:477px" width="16" height="16" viewBox="0 0 16 16"><rect x="1.200" y="2.400" width="11.400" height="11.800" fill="#f2f0fa" stroke="#c8c8dc" stroke-width=".6"/><path d="M1.400 14.200h11.400V4" fill="none" stroke="#1c2454" stroke-width="1.200"/><path d="M6 11l6-1.500v4H6z" fill="#b8c8ec" opacity=".8"/><rect x="3.600" y=".4" width="5.600" height="3.800" rx=".6" fill="#e8dc84" stroke="#8a8440" stroke-width=".8"/><rect x="5" y="1.300" width="2.800" height="1.400" fill="#fcf8c8"/><path d="M2.200 9.300l2.800 2.800L12.400 2.600" fill="none" stroke="#d84848" stroke-width="1.900"/><path d="M9 6.500l3.400-3.900" stroke="#8c4c5c" stroke-width="1.200"/></svg>
<div class="gb" style="left:370px;top:512px;width:760px;height:230px"></div>
<div class="gbl" style="left:378.5px;top:507px;width:158.3px"></div>
<div class="t " style="left:381.5px;top:506.0px;letter-spacing:-0.322px;">7. Предыдущие места работы</div>
<div class="a" style="left:377px;top:524px;width:1px;height:18px;background:#808080"></div>
<div class="a" style="left:378px;top:524px;width:1px;height:18px;background:#fff"></div>
<svg class="a" style="left:390px;top:526px" width="16" height="16" viewBox="0 0 16 16"><path d="M6.500 3h3v3.500H13v3H9.500V13h-3V9.500H3v-3h3.500z" fill="#6cc85c" stroke="#4aa840" stroke-width=".6"/><path d="M7.300 3.800h1.400v3.500h3.500" fill="none" stroke="#d0f4c4" stroke-width=".9"/></svg>
<div class="t " style="left:407.7px;top:525.8px;letter-spacing:-0.218px;">Добавить</div>
<svg class="a" style="left:471px;top:526px" width="16" height="16" viewBox="0 0 16 16"><path d="M8 2.500L14.500 13.500h-13z" fill="#909090" stroke="#808080" stroke-width=".6"/><path d="M2 14.500h13.500" stroke="#fff" stroke-width="1"/></svg>
<div class="t dis" style="left:488.5px;top:525.8px;letter-spacing:-0.246px;">Редактировать</div>
<svg class="a" style="left:578px;top:526px" width="16" height="16" viewBox="0 0 16 16"><rect x="1.500" y="6" width="13" height="4" fill="#909090"/><path d="M2.500 10.500h13" stroke="#fff" stroke-width="1"/></svg>
<div class="t dis" style="left:596.5px;top:525.8px;letter-spacing:-0.234px;">Удалить</div>
<div class="inp" style="left:383px;top:556px;width:760px;height:200px"></div>
<div class="a" style="left:385px;top:558px;width:325px;height:17px;background:#d4d0c8;border:1px solid;border-color:#fff #404040 #404040 #fff;box-shadow:inset -1px -1px 0 #808080"></div>
<div class="t " style="left:387px;top:560.0px;">Организация</div>
<div class="a" style="left:710px;top:558px;width:181px;height:17px;background:#d4d0c8;border:1px solid;border-color:#fff #404040 #404040 #fff;box-shadow:inset -1px -1px 0 #808080"></div>
<div class="t " style="left:714.2px;top:560.0px;">Должность</div>
<div class="a" style="left:891px;top:558px;width:100px;height:17px;background:#d4d0c8;border:1px solid;border-color:#fff #404040 #404040 #fff;box-shadow:inset -1px -1px 0 #808080"></div>
<div class="t " style="left:895.2px;top:560.0px;">Период с</div>
<div class="a" style="left:991px;top:558px;width:93px;height:17px;background:#d4d0c8;border:1px solid;border-color:#fff #404040 #404040 #fff;box-shadow:inset -1px -1px 0 #808080"></div>
<div class="t " style="left:995.2px;top:560.0px;">Период по</div>
<div class="a" style="left:385px;top:575px;width:720px;height:16px;background:#0a246a"></div>
<div class="a" style="left:709.5px;top:575px;width:1px;height:16px;background:#d4d0c8"></div>
<div class="a" style="left:890.5px;top:575px;width:1px;height:16px;background:#d4d0c8"></div>
<div class="a" style="left:990.5px;top:575px;width:1px;height:16px;background:#d4d0c8"></div>
<div class="a" style="left:606px;top:599px;width:500px;height:130px;background:#d4d0c8;border:1px solid;border-color:#d4d0c8 #404040 #404040 #d4d0c8;box-shadow:inset 1px 1px 0 #fff"></div>
<div class="a" style="left:609px;top:602px;width:490px;height:18px;background:linear-gradient(90deg,#0a246a 0,#a6caf0 100%)"></div>
<svg class="a" style="left:610px;top:603px" width="16" height="16" viewBox="0 0 16 16"><rect x="1" y="5" width="14" height="10" rx="1" fill="#303838"/><path d="M5.500 5V3.500Q5.500 2.500 6.500 2.500h3q1 0 1 1V5" fill="none" stroke="#c8d0d0" stroke-width="1.300"/><rect x="1" y="8.500" width="14" height="1" fill="#889090"/><rect x="3.500" y="7.500" width="2.500" height="2.500" fill="#fff"/><rect x="10" y="7.500" width="2.500" height="2.500" fill="#fff"/></svg>
<div class="t " style="left:628.8px;top:604.0px;color:#fff;font-size:12.2px;letter-spacing:-0.116px;"><b>Редактирование места работы</b></div>
<div class="btn" style="left:1037px;top:604px;width:16px;height:14px"></div>
<div class="btn" style="left:1053px;top:604px;width:16px;height:14px"></div>
<div class="btn" style="left:1071px;top:604px;width:16px;height:14px"></div>
<div class="a" style="left:1041px;top:613px;width:6px;height:2px;background:#000"></div>
<div class="a" style="left:1057px;top:607px;width:9px;height:8px;border:1px solid #808080;border-top-width:2px;box-shadow:1px 1px 0 #fff"></div>
<svg class="a" style="left:1075px;top:607px" width="8" height="7" viewBox="0 0 8 7"><path d="M0 0L8 7M8 0L0 7" stroke="#000" stroke-width="1.6" fill="none"/></svg>
<div class="gb" style="left:614.5px;top:632px;width:466px;height:120px"></div>
<div class="gbl" style="left:620.2px;top:627px;width:99.9px"></div>
<div class="t " style="left:623.2px;top:626.0px;letter-spacing:-0.434px;">Заполните данные</div>
<div class="t " style="left:630px;top:651.0px;letter-spacing:0.281px;"><b>Организация:</b></div>
<div class="inp" style="left:734px;top:646px;width:335px;height:21px"></div>
<div class="a" style="left:737px;top:650px;width:1px;height:13px;background:#000"></div>
<div class="t " style="left:630px;top:680.5px;letter-spacing:0.213px;"><b>Должность:</b></div>
<div class="inp" style="left:734px;top:676px;width:335px;height:21px"></div>
<div class="inp" style="left:734px;top:706px;width:65px;height:21px"></div>
<div class="inp" style="left:834px;top:706px;width:65px;height:21px"></div>
<div class="t " style="left:738px;top:707.6px;">1900</div>
<div class="t " style="left:838.4px;top:707.6px;">1900</div>
</body></html>
